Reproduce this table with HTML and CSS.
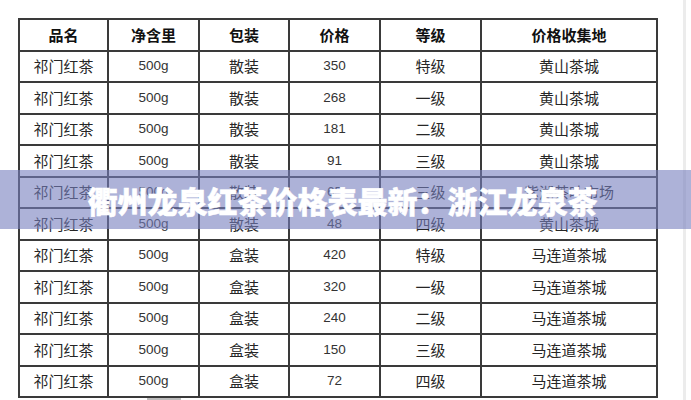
FILE: index.html
```html
<!DOCTYPE html>
<html lang="zh-CN">
<head>
<meta charset="utf-8">
<title>衢州龙泉红茶价格表最新：浙江龙泉茶</title>
<link rel="stylesheet" href="styles.css">
</head>
<body>
<div class="page">
  <div class="sheet">
    <table class="price-table">
      <colgroup>
        <col class="c1"><col class="c2"><col class="c3"><col class="c4"><col class="c5"><col class="c6">
      </colgroup>
      <thead>
        <tr><th>品名</th><th>净含里</th><th>包装</th><th>价格</th><th>等级</th><th>价格收集地</th></tr>
      </thead>
      <tbody>
        <tr><td>祁门红茶</td><td class="num">500g</td><td>散装</td><td class="num">350</td><td>特级</td><td>黄山茶城</td></tr>
        <tr><td>祁门红茶</td><td class="num">500g</td><td>散装</td><td class="num">268</td><td>一级</td><td>黄山茶城</td></tr>
        <tr><td>祁门红茶</td><td class="num">500g</td><td>散装</td><td class="num">181</td><td>二级</td><td>黄山茶城</td></tr>
        <tr><td>祁门红茶</td><td class="num">500g</td><td>散装</td><td class="num">91</td><td>三级</td><td>黄山茶城</td></tr>
        <tr><td>祁门红茶</td><td class="num">500g</td><td>散装</td><td class="num">65</td><td>三级</td><td>紫湖茶叶市场</td></tr>
        <tr><td>祁门红茶</td><td class="num">500g</td><td>散装</td><td class="num">48</td><td>四级</td><td>黄山茶城</td></tr>
        <tr><td>祁门红茶</td><td class="num">500g</td><td>盒装</td><td class="num">420</td><td>特级</td><td>马连道茶城</td></tr>
        <tr><td>祁门红茶</td><td class="num">500g</td><td>盒装</td><td class="num">320</td><td>一级</td><td>马连道茶城</td></tr>
        <tr><td>祁门红茶</td><td class="num">500g</td><td>盒装</td><td class="num">240</td><td>二级</td><td>马连道茶城</td></tr>
        <tr><td>祁门红茶</td><td class="num">500g</td><td>盒装</td><td class="num">150</td><td>三级</td><td>马连道茶城</td></tr>
        <tr><td>祁门红茶</td><td class="num">500g</td><td>盒装</td><td class="num">72</td><td>四级</td><td>马连道茶城</td></tr>
      </tbody>
    </table>
    <div class="scroll-mark"></div>
  </div>
  <div class="edge"></div>
  <div class="banner"><h1 class="banner-title">衢州龙泉红茶价格表最新：浙江龙泉茶</h1></div>
</div>
</body>
</html>
```

FILE: styles.css
```css
html, body {
  margin: 0;
  padding: 0;
  background: #ffffff;
}

.page {
  position: relative;
  width: 691px;
  height: 400px;
  overflow: hidden;
  display: flex;
  font-family: "Noto Sans CJK SC", "Noto Sans", sans-serif;
}

.sheet {
  width: 683px;
  padding: 18px 0 0 18px;
  box-sizing: border-box;
  position: relative;
}

.edge {
  width: 3px;
  background: #ececec;
}

.price-table {
  border-collapse: collapse;
  table-layout: fixed;
  width: 638px;
  color: #262626;
}

.c1 { width: 89px; }
.c2 { width: 91px; }
.c3 { width: 90px; }
.c4 { width: 91px; }
.c5 { width: 101px; }
.c6 { width: 176px; }

.price-table th,
.price-table td {
  border: 2px solid #3a3a3a;
  height: 29.5px;
  padding: 0;
  text-align: center;
  vertical-align: middle;
  font-size: 15px;
  line-height: 20px;
}

.price-table th {
  font-weight: 700;
  color: #111111;
}

.price-table td {
  font-weight: 400;
}

.price-table td.num {
  font-family: "Liberation Sans", "Noto Sans", sans-serif;
  font-size: 13.5px;
  color: #333333;
}

.scroll-mark {
  position: absolute;
  left: 147px;
  top: 398px;
  width: 34px;
  height: 2px;
  background: #bdbdbd;
}

.banner {
  position: absolute;
  left: 0;
  top: 170px;
  width: 691px;
  height: 59px;
  background: rgba(118, 126, 190, 0.6);
  display: flex;
  align-items: center;
  justify-content: center;
}

.banner-title {
  margin: 0 0 0 -6px;
  font-family: "Noto Sans CJK SC", sans-serif;
  font-weight: 900;
  font-size: 30px;
  line-height: 36px;
  color: #ffffff;
  letter-spacing: 0;
  -webkit-text-stroke: 0.5px #ffffff;
}
```
